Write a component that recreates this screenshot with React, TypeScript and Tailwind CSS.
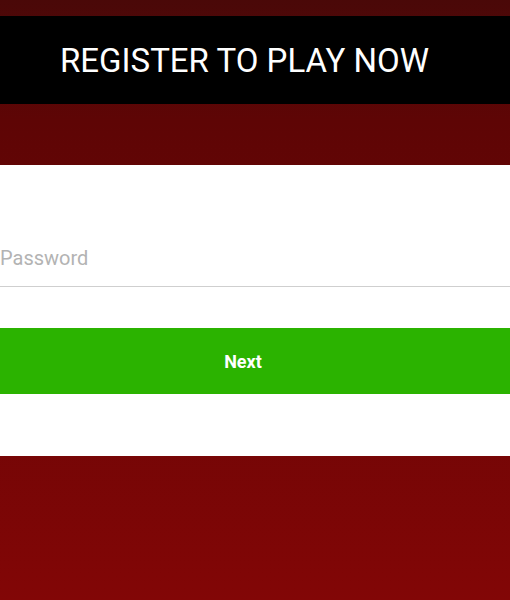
import React from 'react';

const App = () => {
  return (
    <div className="h-[600px] overflow-hidden bg-linear-to-b from-[#4a0808] via-[#5e0505] via-20% to-[#820606] font-['Roboto',sans-serif]">
      <div className="h-4" />
      <div className="h-[88px] bg-black flex items-center pl-[60px]">
        <h1 className="text-white text-[33px] leading-none font-normal">
          REGISTER TO PLAY NOW
        </h1>
      </div>
      <div className="h-[61px]" />
      <div className="h-[291px] bg-white flex flex-col">
        <div className="h-[61px]" />
        <div className="h-[61px] border-b border-[#cfcfcf] flex items-end pb-[18px]">
          <span className="text-[20px] leading-none text-[#b3b3b3]">Password</span>
        </div>
        <div className="h-[41px]" />
        <button className="h-[66px] w-full bg-[#2bb300] text-white text-[18px] font-bold flex items-center justify-center pr-[24px]">
          Next
        </button>
      </div>
    </div>
  );
};

export default App;
